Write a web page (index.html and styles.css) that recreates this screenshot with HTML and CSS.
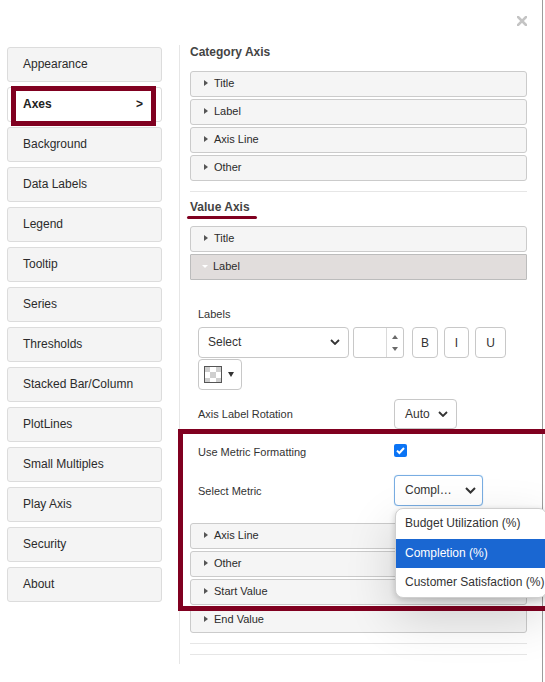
FILE: index.html
```html
<!DOCTYPE html>
<html lang="en">
<head>
<meta charset="utf-8">
<title>Chart settings</title>
<link rel="stylesheet" href="styles.css">
</head>
<body>
<div class="modal">
  <div class="modal-header">
    <button class="close-btn" aria-label="Close">
      <svg width="10" height="10" viewBox="0 0 10 10"><path d="M1 1L9 9M9 1L1 9" stroke="#c4c4c4" stroke-width="2.6" stroke-linecap="square"/></svg>
    </button>
  </div>
  <div class="modal-body">
    <nav class="sidebar">
      <div class="nav-item">Appearance</div>
      <div class="nav-item active"><span>Axes</span><span class="caret">&gt;</span></div>
      <div class="nav-item">Background</div>
      <div class="nav-item">Data Labels</div>
      <div class="nav-item">Legend</div>
      <div class="nav-item">Tooltip</div>
      <div class="nav-item">Series</div>
      <div class="nav-item">Thresholds</div>
      <div class="nav-item">Stacked Bar/Column</div>
      <div class="nav-item">PlotLines</div>
      <div class="nav-item">Small Multiples</div>
      <div class="nav-item">Play Axis</div>
      <div class="nav-item">Security</div>
      <div class="nav-item">About</div>
    </nav>
    <section class="panel">
      <h3 class="section-title">Category Axis</h3>
      <div class="acc"><span class="tri"></span>Title</div>
      <div class="acc"><span class="tri"></span>Label</div>
      <div class="acc"><span class="tri"></span>Axis Line</div>
      <div class="acc"><span class="tri"></span>Other</div>
      <hr class="sep">
      <h3 class="section-title marked">Value Axis</h3>
      <div class="acc"><span class="tri"></span>Title</div>
      <div class="acc open"><span class="tri"></span>Label</div>
      <div class="acc-body">
        <div class="caption">Labels</div>
        <div class="controls">
          <div class="select font-select"><span>Select</span>
            <svg class="chev" width="10" height="6" viewBox="0 0 10 6"><path d="M1 1L5 5L9 1" fill="none" stroke="#333" stroke-width="1.8"/></svg>
          </div>
          <div class="num"><div class="spin"><span class="up"></span><span class="down"></span></div></div>
          <div class="fmt-btn b">B</div>
          <div class="fmt-btn i">I</div>
          <div class="fmt-btn u">U</div>
        </div>
        <div class="color-btn"><span class="swatch"></span><span class="down-tri"></span></div>
        <div class="field-row first">
          <span class="field-label">Axis Label Rotation</span>
          <div class="select auto-select"><span>Auto</span>
            <svg class="chev" width="10" height="6" viewBox="0 0 10 6"><path d="M1 1L5 5L9 1" fill="none" stroke="#333" stroke-width="1.8"/></svg>
          </div>
        </div>
        <div class="field-row">
          <span class="field-label">Use Metric Formatting</span>
          <span class="checkbox"><svg width="13" height="13" viewBox="0 0 13 13"><path d="M3 6.6L5.4 9L10 4" fill="none" stroke="#fff" stroke-width="2"/></svg></span>
        </div>
        <div class="field-row tall">
          <span class="field-label">Select Metric</span>
          <div class="select-wrap">
            <div class="select metric-select"><span>Compl…</span>
              <svg class="chev" width="11" height="7" viewBox="0 0 11 7"><path d="M1 1L5.5 5.5L10 1" fill="none" stroke="#333" stroke-width="2"/></svg>
            </div>
            <ul class="popover">
              <li>Budget Utilization (%)</li>
              <li class="selected">Completion (%)</li>
              <li>Customer Satisfaction (%)</li>
            </ul>
          </div>
        </div>
      </div>
      <div class="acc"><span class="tri"></span>Axis Line</div>
      <div class="acc"><span class="tri"></span>Other</div>
      <div class="acc"><span class="tri"></span>Start Value</div>
      <div class="acc"><span class="tri"></span>End Value</div>
      <hr class="sep">
      <hr class="sep last">
      <div class="annot-box"></div>
    </section>
  </div>
</div>
</body>
</html>
```

FILE: styles.css
```css
html, body {
  margin: 0;
  padding: 0;
  overflow: hidden;
  background: #fff;
}
body {
  font-family: "Liberation Sans", Arial, sans-serif;
  color: #333;
}
.modal {
  position: relative;
  width: 543px;
  height: 682px;
  box-sizing: border-box;
  border-right: 1px solid #9c9c9c;
}
.modal-header {
  height: 45px;
  box-sizing: border-box;
  display: flex;
  justify-content: flex-end;
  align-items: flex-start;
  padding: 16px 15px 0 0;
}
.close-btn {
  width: 10px;
  height: 10px;
  padding: 0;
  border: 0;
  background: none;
  display: block;
}
.close-btn svg { display: block; }
.modal-body {
  display: flex;
  align-items: flex-start;
}
.sidebar {
  width: 155px;
  margin: 2px 0 0 7px;
  display: flex;
  flex-direction: column;
  gap: 5px;
}
.nav-item {
  position: relative;
  height: 35px;
  box-sizing: border-box;
  border: 1px solid #dcdcdc;
  border-radius: 3px;
  background: #f4f4f4;
  display: flex;
  align-items: center;
  justify-content: space-between;
  padding: 0 18px 1px 15px;
  font-size: 12px;
  color: #2b2b2b;
}
.nav-item.active {
  background: #fff;
  font-weight: bold;
  color: #222;
}
.nav-item.active::after {
  content: "";
  position: absolute;
  left: 3px;
  top: -2px;
  width: 145px;
  height: 40px;
  box-sizing: border-box;
  border: 5px solid #800020;
}
.panel {
  position: relative;
  width: 363px;
  margin-left: 17px;
  box-sizing: border-box;
  border-left: 1px solid #e6e6e6;
  padding: 0 15px 9px 10px;
}
.section-title {
  position: relative;
  margin: 0 0 12px;
  font-size: 12px;
  line-height: 14px;
  font-weight: bold;
  color: #444;
}
.section-title.marked::after {
  content: "";
  position: absolute;
  left: -3px;
  top: 16px;
  width: 70px;
  height: 3px;
  border-radius: 2px;
  background: #800020;
}
.sep {
  border: 0;
  border-top: 1px solid #e6e6e6;
  height: 0;
  margin: 10px 0 8px;
}
.sep.last { margin-bottom: 0; }
.acc {
  height: 26px;
  box-sizing: border-box;
  border: 1px solid #cbcbcb;
  border-radius: 3px;
  background: #f5f5f5;
  margin-bottom: 2px;
  display: flex;
  align-items: center;
  padding: 0 0 2px 13px;
  font-size: 11px;
  color: #2b2b2b;
}
.tri {
  width: 0;
  height: 0;
  border-left: 4px solid #555;
  border-top: 3px solid transparent;
  border-bottom: 3px solid transparent;
  margin-right: 6px;
}
.acc.open {
  background: #e1dddc;
  border-color: #bcbcbc;
  border-radius: 1px;
}
.acc.open .tri {
  border-left: 3.5px solid transparent;
  border-right: 3.5px solid transparent;
  border-top: 3px solid #fff;
  border-bottom: 0;
  margin-left: -2px;
  margin-right: 5px;
}
.acc-body {
  padding: 25px 8px 17px;
}
.caption {
  font-size: 11px;
  line-height: 14px;
  color: #333;
  margin-bottom: 6px;
}
.controls {
  display: flex;
  align-items: flex-start;
}
.select {
  height: 31px;
  box-sizing: border-box;
  border: 1px solid #c8c8c8;
  border-radius: 4px;
  background: #fff;
  display: flex;
  align-items: center;
  justify-content: space-between;
  padding: 0 8px 1px 9px;
  font-size: 12px;
  color: #333;
}
.chev { display: block; }
.font-select { width: 151px; }
.num {
  width: 51px;
  height: 31px;
  box-sizing: border-box;
  margin-left: 4px;
  border: 1px solid #c8c8c8;
  border-radius: 3px;
  display: flex;
  justify-content: flex-end;
}
.spin {
  width: 16px;
  border-left: 1px solid #dadada;
  display: flex;
  flex-direction: column;
  align-items: center;
  justify-content: center;
  gap: 8px;
}
.spin .up {
  width: 0; height: 0;
  border-left: 3px solid transparent;
  border-right: 3px solid transparent;
  border-bottom: 4px solid #6a6a6a;
}
.spin .down {
  width: 0; height: 0;
  border-left: 3px solid transparent;
  border-right: 3px solid transparent;
  border-top: 4px solid #6a6a6a;
}
.fmt-btn {
  height: 31px;
  box-sizing: border-box;
  border: 1px solid #c8c8c8;
  border-radius: 4px;
  display: flex;
  align-items: center;
  justify-content: center;
  font-size: 12px;
  color: #333;
}
.fmt-btn.b { width: 26px; margin-left: 8px; }
.fmt-btn.i { width: 25px; margin-left: 6px; }
.fmt-btn.u { width: 31px; margin-left: 6px; }
.color-btn {
  width: 44px;
  height: 31px;
  box-sizing: border-box;
  margin-top: 1px;
  border: 1px solid #c8c8c8;
  border-radius: 4px;
  display: flex;
  align-items: center;
  padding-left: 5px;
  gap: 6px;
}
.swatch {
  width: 18px;
  height: 17px;
  box-sizing: border-box;
  border: 1px solid #555;
  background: repeating-conic-gradient(#fff 0 25%, #cfcfcf 0 50%) -1px -1px / 12px 12px;
}
.down-tri {
  width: 0; height: 0;
  border-left: 3px solid transparent;
  border-right: 3px solid transparent;
  border-top: 5px solid #333;
}
.field-row {
  display: flex;
  align-items: center;
  height: 30px;
  margin-top: 8px;
  font-size: 11px;
  color: #333;
}
.field-row.first { margin-top: 9px; }
.field-row.tall { height: 31px; }
.field-label { width: 196px; flex: none; }
.auto-select {
  width: 63px;
  height: 30px;
  padding: 0 8px 1px 10px;
}
.checkbox {
  width: 13px;
  height: 13px;
  margin-bottom: 4px;
  border-radius: 2px;
  background: #0b74f5;
}
.checkbox svg { display: block; }
.select-wrap { position: relative; }
.metric-select {
  width: 89px;
  padding: 0 6px 1px 10px;
  border-color: #79ade2;
  box-shadow: 0 0 1px rgba(102, 175, 233, .6);
}
.popover {
  position: absolute;
  z-index: 5;
  left: 1px;
  top: 33px;
  width: 150px;
  margin: 0;
  padding: 0;
  list-style: none;
  background: #fff;
  border: 1px solid #cfcfcf;
  border-radius: 8px;
  overflow: hidden;
  box-shadow: 0 2px 6px rgba(0, 0, 0, .18), 0 18px 50px rgba(0, 0, 0, .16);
}
.popover li {
  height: 29px;
  line-height: 29px;
  padding: 0 9px;
  font-size: 12px;
  color: #333;
  white-space: nowrap;
}
.popover li:first-child { height: 30px; }
.popover li.selected {
  background: #1a67d2;
  color: #fff;
}
.annot-box {
  position: absolute;
  z-index: 2;
  left: -2px;
  top: 384px;
  width: 380px;
  height: 182px;
  box-sizing: border-box;
  border: 5px solid #800020;
  pointer-events: none;
}
```
